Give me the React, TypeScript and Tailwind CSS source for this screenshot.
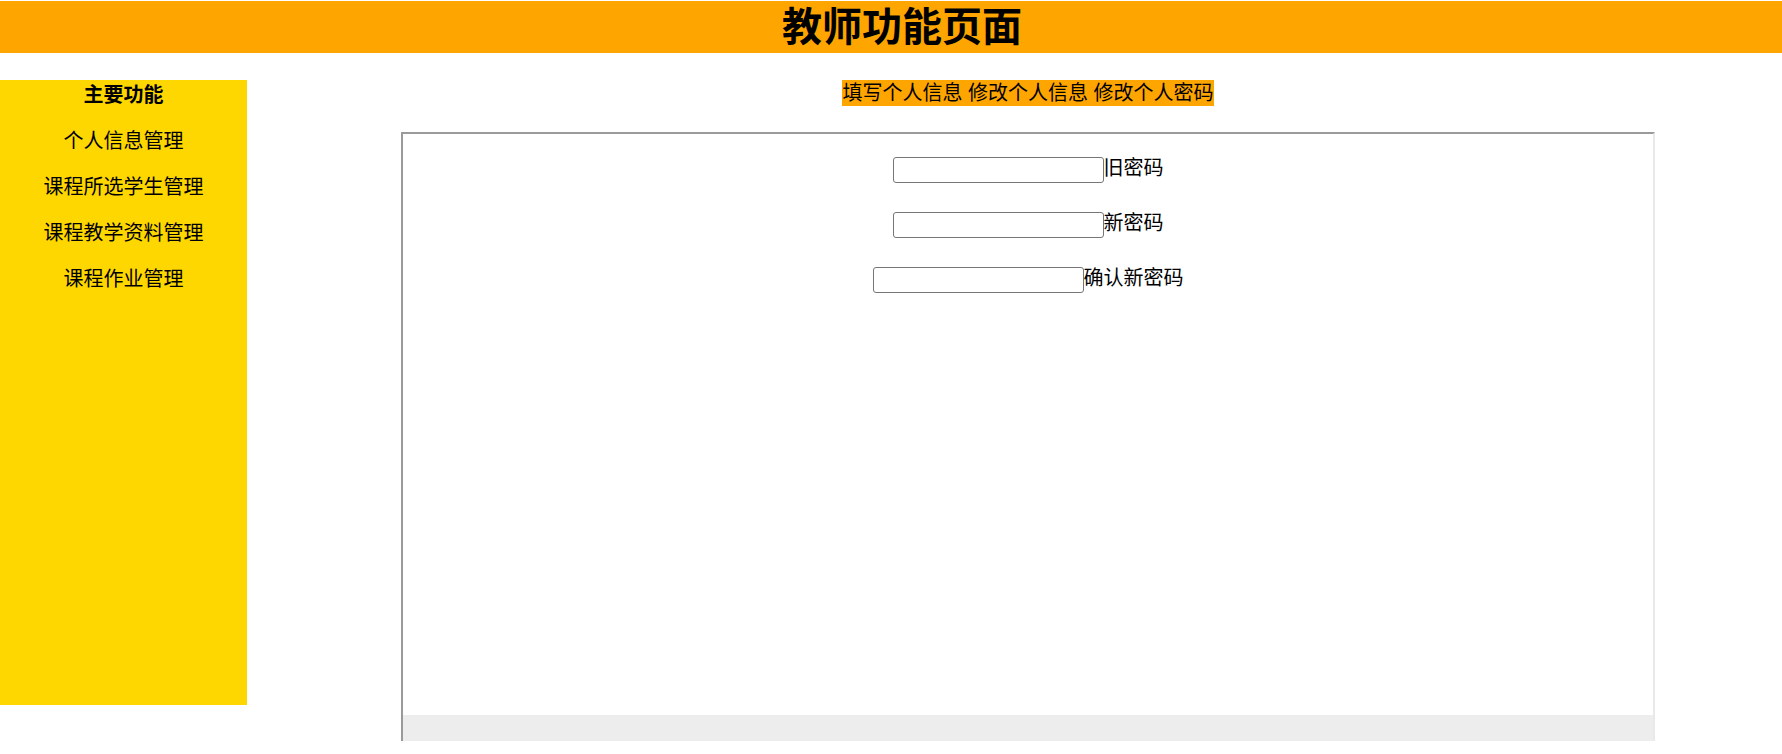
import React from 'react'

const menu = ['个人信息管理', '课程所选学生管理', '课程教学资料管理', '课程作业管理']

const fields = [
  { id: 'old', label: '旧密码' },
  { id: 'new', label: '新密码' },
  { id: 'confirm', label: '确认新密码' },
]

export default function App() {
  return (
    <div className="min-h-screen bg-white pt-[1px] text-black font-['Liberation_Sans','Noto_Sans_CJK_SC',sans-serif]">
      <header className="flex h-[52px] items-center justify-center bg-[#ffa500] pl-[22px]">
        <h1 className="text-[40px] font-bold leading-none">教师功能页面</h1>
      </header>

      <div className="mt-[27px] flex items-start">
        <aside className="flex h-[625px] w-[247px] shrink-0 flex-col items-center bg-[#ffd700]">
          <p className="text-[20px] font-bold leading-[31px]">主要功能</p>
          {menu.map((item) => (
            <p key={item} className="mt-[15px] text-[20px] leading-[31px]">
              {item}
            </p>
          ))}
        </aside>

        <main className="ml-[154px] flex w-[1254px] shrink-0 flex-col">
          <div className="flex h-[26px] justify-center">
            <span className="whitespace-pre bg-[#ffa500] text-[20px] leading-[26px]">
              填写个人信息 修改个人信息 修改个人密码
            </span>
          </div>

          <div className="mt-[26px] flex h-[609px] flex-col border-l-2 border-r-2 border-t-2 border-l-[#9a9a9a] border-r-[#e9e9e9] border-t-[#9a9a9a]">
            <div className="flex flex-1 flex-col items-center gap-[29px] pt-[23px]">
              {fields.map((f) => (
                <div key={f.id} className="flex h-[26px] items-start">
                  <input
                    type="password"
                    className="h-[26px] w-[211px] rounded-[3px] border border-[#767676] bg-white px-1 text-[16px] outline-none"
                  />
                  <span className="text-[20px] leading-[22px]">{f.label}</span>
                </div>
              ))}
            </div>
            <div className="h-[26px] bg-[#ededed]" />
          </div>
        </main>
      </div>
    </div>
  )
}
